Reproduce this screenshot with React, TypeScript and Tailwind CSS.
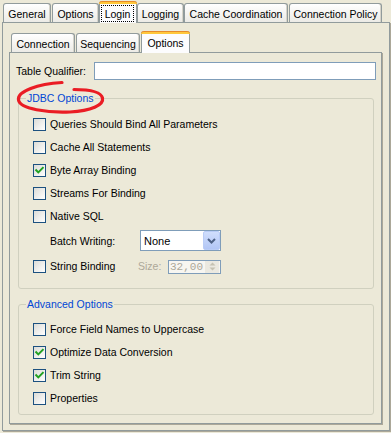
import React from "react";

type TabProps = { label: string; cls: string; selected?: boolean; focus?: boolean };

function Tab({ label, cls, selected, focus }: TabProps) {
  if (selected) {
    return (
      <div className={`${cls} relative z-10 h-[22px] -mb-px flex flex-col border-x border-[#919b9c] bg-[#fcfcfe] rounded-t-[3px]`}>
        <div className="-mx-px h-[3px] rounded-t-[3px] bg-[#ffc83c] border-t border-[#e68b2c]" />
        {focus ? (
          <div className="mx-[1px] mt-[1px] h-[17px] w-[33px] border border-dotted border-black flex items-center justify-center">
            {label}
          </div>
        ) : (
          <div className="flex-1 flex items-center justify-center pb-[2px]">{label}</div>
        )}
      </div>
    );
  }
  return (
    <div
      className={`${cls} h-[19px] border border-b-0 border-[#919b9c] rounded-t-[3px] bg-linear-to-b from-white to-[#ecebe6] shadow-[inset_-1px_0_0_#d6d4ca] flex items-center justify-center pt-[1px]`}
    >
      {label}
    </div>
  );
}

function Check({ checked }: { checked?: boolean }) {
  return (
    <span className="w-[13px] h-[13px] shrink-0 border border-[#1c5180] bg-linear-to-br from-[#dcdcd7] to-white flex items-center justify-center">
      {checked && (
        <svg width="11" height="11" viewBox="0 0 11 11">
          <path d="M2.2 5.2 L4.3 7.4 L8.8 2.8" stroke="#21a121" strokeWidth="2" fill="none" strokeLinecap="square" />
        </svg>
      )}
    </span>
  );
}

function CheckRow({ label, checked }: { label: string; checked?: boolean }) {
  return (
    <div className="h-[23px] flex items-center pl-[7px]">
      <Check checked={checked} />
      <span className="ml-[4px] mb-[2px]">{label}</span>
    </div>
  );
}

export default function App() {
  return (
    <div className="w-[391px] h-[433px] bg-[#ece9d8] overflow-hidden relative font-['Liberation_Sans',Arial,sans-serif] text-[10.5px] text-black leading-[12px]">
      {/* outer tabs */}
      <div className="h-[22px] flex items-end pl-[3px]">
        <Tab label="General" cls="w-[48px]" />
        <Tab label="Options" cls="ml-[1px] w-[47px]" />
        <Tab label="Login" cls="w-[38px]" selected focus />
        <Tab label="Logging" cls="w-[47px]" />
        <Tab label="Cache Coordination" cls="w-[104px]" />
        <Tab label="Connection Policy" cls="ml-[1px] w-[93px]" />
      </div>

      <div className="ml-[2px] w-[388px] h-[409px] border border-[#919b9c] shadow-[1px_1px_0_#aca899] pl-[6px]">
        {/* inner tabs */}
        <div className="mt-[7px] h-[22px] flex items-end pl-[2px]">
          <Tab label="Connection" cls="w-[64px]" />
          <Tab label="Sequencing" cls="ml-[1px] w-[64px]" />
          <Tab label="Options" cls="ml-[1px] w-[49px]" selected />
        </div>

        <div className="w-[373px] h-[372px] border border-[#919b9c] shadow-[1px_1px_0_#aca899] flex flex-col">
          <div className="mt-[9px] h-[18px] flex items-center pl-[6px] pr-[5px]">
            <span>Table Qualifier:</span>
            <div className="ml-auto w-[282px] h-[18px] border border-[#7f9db9] bg-white" />
          </div>

          <fieldset className="ml-[8px] mr-[7px] mt-[12px] border border-[#d0d0bf] rounded-[3px] px-[7px] pt-[9px] pb-[10px]">
            <legend className="px-[1px] leading-[12px] text-[#0046d5]">JDBC Options</legend>
            <CheckRow label="Queries Should Bind All Parameters" />
            <CheckRow label="Cache All Statements" />
            <CheckRow label="Byte Array Binding" checked />
            <CheckRow label="Streams For Binding" />
            <CheckRow label="Native SQL" />
            <div className="h-[27px] pt-[2px] pb-[4px] flex items-center pl-[24px]">
              <span className="w-[90px]">Batch Writing:</span>
              <div className="w-[81px] h-[21px] border border-[#7f9db9] bg-white flex items-center">
                <span className="pl-[3px] text-[11px]">None</span>
                <div className="ml-auto w-[17px] h-[19px] rounded-[2px] border border-[#b9ccf6] bg-linear-to-b from-[#d0defc] to-[#b2c6f5] flex items-center justify-center">
                  <svg width="9" height="6" viewBox="0 0 9 6">
                    <path d="M1 1 L4.5 4.5 L8 1" stroke="#4d6185" strokeWidth="2" fill="none" />
                  </svg>
                </div>
              </div>
            </div>
            <div className="h-[23px] flex items-center pl-[7px]">
              <Check />
              <span className="ml-[4px] mb-[2px] w-[88px]">String Binding</span>
              <span className="w-[30px] mb-[2px] text-[#aca899]">Size:</span>
              <div className="w-[53px] h-[14px] border border-[#7f9db9] bg-[#f7f6f1] flex items-center">
                <span className="pl-[1px] font-['Liberation_Mono',monospace] text-[11px] leading-[12px] text-[#aca899]">32,00</span>
                <div className="ml-auto mr-[1px] w-[14px] h-[12px] bg-[#ebe9e0] flex flex-col items-center justify-center gap-[1px]">
                  <svg width="7" height="4" viewBox="0 0 7 4">
                    <path d="M0.5 3.5 L3.5 0.5 L6.5 3.5 Z" fill="#c5c2b2" />
                  </svg>
                  <svg width="7" height="4" viewBox="0 0 7 4">
                    <path d="M0.5 0.5 L3.5 3.5 L6.5 0.5 Z" fill="#c5c2b2" />
                  </svg>
                </div>
              </div>
            </div>
          </fieldset>

          <fieldset className="ml-[8px] mr-[7px] mt-[9px] border border-[#d0d0bf] rounded-[3px] px-[7px] pt-[8px] pb-[4px]">
            <legend className="px-[1px] leading-[12px] text-[#0046d5]">Advanced Options</legend>
            <CheckRow label="Force Field Names to Uppercase" />
            <CheckRow label="Optimize Data Conversion" checked />
            <CheckRow label="Trim String" checked />
            <CheckRow label="Properties" />
          </fieldset>
        </div>
      </div>

      {/* red hand-drawn annotation */}
      <svg className="absolute left-0 top-0 pointer-events-none" width="391" height="433" viewBox="0 0 391 433">
        <path
          d="M62 82.5 C38 84, 17 91, 18.5 100 C20 109, 48 113, 70 112 C91 111, 104 105, 102.5 98 C101 92, 90 89.5, 74 89.5"
          stroke="#ea1c24"
          strokeWidth="3.2"
          fill="none"
          strokeLinecap="round"
        />
      </svg>
    </div>
  );
}
